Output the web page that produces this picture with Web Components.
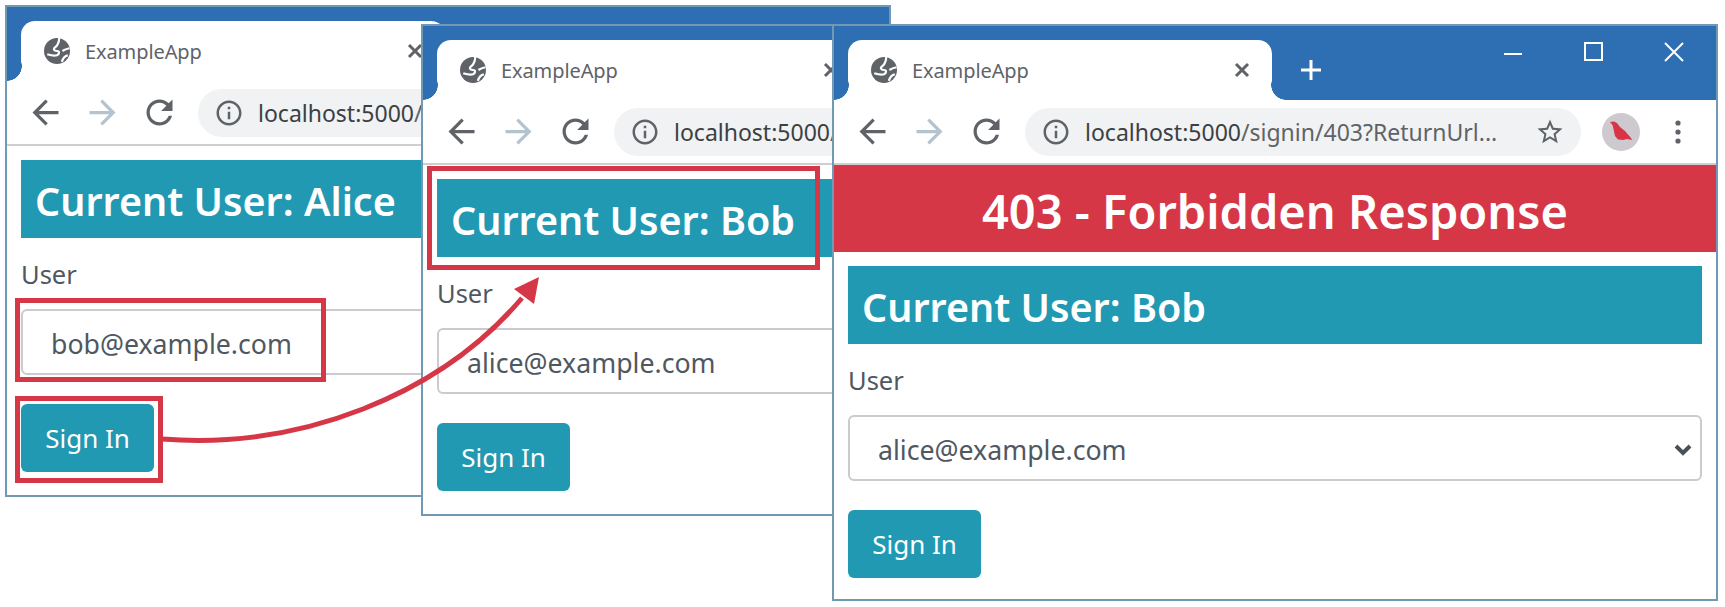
<!DOCTYPE html>
<html lang="en">
<head>
<meta charset="utf-8">
<title>ExampleApp</title>
<style>
  body { margin: 0; background: #fff; font-family: "Noto Sans", "Open Sans", sans-serif; }
</style>
</head>
<body>
<app-stage>
  <browser-window x="5" y="5" url="localhost:5000/">
    <user-form user="Alice" email="bob@example.com"></user-form>
  </browser-window>
  <browser-window x="421" y="24" url="localhost:5000/">
    <user-form user="Bob" email="alice@example.com"></user-form>
  </browser-window>
  <browser-window x="832" y="24" url="localhost:5000/signin/403?ReturnUrl..." controls>
    <status-banner>403 - Forbidden Response</status-banner>
    <user-form user="Bob" email="alice@example.com" select></user-form>
  </browser-window>
  <callout-layer></callout-layer>
</app-stage>

<script>
/**
 * The stage, a free canvas that holds the windows.
 */
customElements.define('app-stage',
  class extends HTMLElement {
    constructor () {
      super()
      this.attachShadow({ mode: 'open' }).innerHTML = `
        <style>
          :host {
            display: block;
            position: relative;
            width: 1725px;
            height: 607px;
            overflow: hidden;
            background: #fff;
          }
        </style>
        <slot></slot>
      `
    }
  })

/**
 * Material icon paths used by the browser chrome.
 */
const icons = {
  back: 'M20 11H7.83l5.59-5.59L12 4l-8 8 8 8 1.41-1.41L7.83 13H20v-2z',
  reload: 'M17.65 6.35C16.2 4.9 14.21 4 12 4c-4.42 0-7.99 3.58-7.99 8s3.57 8 7.99 8c3.73 0 6.84-2.55 7.73-6h-2.08c-.82 2.33-3.04 4-5.65 4-3.31 0-6-2.69-6-6s2.69-6 6-6c1.66 0 3.14.69 4.22 1.78L13 11h7V4l-2.35 2.35z',
  info: 'M11 7h2v2h-2zm0 4h2v6h-2zm1-9C6.48 2 2 6.48 2 12s4.48 10 10 10 10-4.48 10-10S17.52 2 12 2zm0 18c-4.41 0-8-3.59-8-8s3.59-8 8-8 8 3.59 8 8-3.59 8-8 8z',
  star: 'M22 9.24l-7.19-.62L12 2 9.19 8.63 2 9.24l5.46 4.73L5.82 21 12 17.27 18.18 21l-1.63-7.03L22 9.24zM12 15.4l-3.76 2.27 1-4.28-3.32-2.88 4.38-.38L12 6.1l1.71 4.04 4.38.38-3.32 2.88 1 4.28L12 15.4z'
}

const windowTemplate = document.createElement('template')
windowTemplate.innerHTML = `
  <style>
    :host {
      display: block;
      position: absolute;
      box-sizing: border-box;
      width: 886px;
      border: 2px solid #7199b4;
      background: #fff;
      color: #5f6368;
      font-family: "Noto Sans", "Open Sans", sans-serif;
    }

    #strip {
      display: flex;
      align-items: flex-end;
      height: 74px;
      background: #2e6eb3;
    }

    #tab {
      position: relative;
      display: flex;
      align-items: center;
      box-sizing: border-box;
      width: 424px;
      height: 60px;
      margin-left: 14px;
      padding: 0 22px 0 23px;
      border-radius: 14px 14px 0 0;
      background: #fff;
    }

    #tab::before, #tab::after {
      content: '';
      position: absolute;
      bottom: 0;
      width: 15px;
      height: 20px;
    }

    #tab::before {
      left: -14px;
      background: radial-gradient(circle 15px at 0 5px, #2e6eb3 14.5px, #fff 15px);
    }

    #tab::after {
      right: -14px;
      background: radial-gradient(circle 15px at 100% 5px, #2e6eb3 14.5px, #fff 15px);
    }

    #title {
      margin-left: 15px;
      font-size: 20px;
      letter-spacing: -0.1px;
      white-space: nowrap;
    }

    #close {
      margin-left: auto;
    }

    #plus {
      display: flex;
      margin: 0 0 19px 28px;
    }

    #controls {
      display: none;
      align-self: flex-start;
      margin-left: auto;
      padding-right: 1px;
    }

    :host([controls]) #controls {
      display: flex;
    }

    #controls svg {
      display: block;
      width: 81px;
      height: 52px;
    }

    #toolbar {
      display: flex;
      align-items: center;
      box-sizing: border-box;
      height: 65px;
      padding-left: 10px;
      border-bottom: 2px solid #cfcfd2;
    }

    .cell {
      display: flex;
      justify-content: center;
      flex: none;
      width: 57px;
    }

    #pill {
      display: flex;
      align-items: center;
      flex: none;
      box-sizing: border-box;
      width: 556px;
      height: 48px;
      margin-left: 10px;
      padding: 0 16px 0 16px;
      border-radius: 24px;
      background: #f0f2f3;
    }

    #url {
      margin-left: 14px;
      font-size: 23px;
      color: #5f6368;
      white-space: nowrap;
    }

    #url b {
      font-weight: 400;
      color: #3c4043;
    }

    #star {
      margin-left: auto;
    }

    #avatar {
      display: flex;
      flex: none;
      margin-left: 21px;
    }

    #menu {
      display: flex;
      flex: none;
      margin-left: 34px;
    }

    svg {
      display: block;
      flex: none;
      fill: #5f6368;
    }
  </style>
  <div id="strip">
    <div id="tab">
      <svg width="26" height="26" viewBox="0 0 24 24">
        <circle cx="12" cy="12" r="12"/>
        <path d="M14 0 C14 4 13 6 11 8 C8 10 9 12 12 12 C15 12 14 15 12 16 C9 17 6 16 3 15 M17 12 C18.5 11 21 10 23.5 9.5 M22 16 C19 16.5 17.5 18.5 16.5 22" fill="none" stroke="#fff" stroke-width="2"/>
      </svg>
      <span id="title">ExampleApp</span>
      <svg id="close" width="16" height="16" viewBox="0 0 16 16"><path d="M2 2 L14 14 M14 2 L2 14" fill="none" stroke="#5f6368" stroke-width="3"/></svg>
    </div>
    <div id="plus">
      <svg width="22" height="22" viewBox="0 0 22 22"><path d="M11 1 V21 M1 11 H21" fill="none" stroke="#fff" stroke-width="3"/></svg>
    </div>
    <div id="controls">
      <svg viewBox="0 0 81 52"><path d="M32 28 H50" fill="none" stroke="#fff" stroke-width="2"/></svg>
      <svg viewBox="0 0 81 52"><rect x="32" y="17" width="17" height="17" fill="none" stroke="#fff" stroke-width="2"/></svg>
      <svg viewBox="0 0 81 52"><path d="M31 17 L49 35 M49 17 L31 35" fill="none" stroke="#fff" stroke-width="2"/></svg>
    </div>
  </div>
  <div id="toolbar">
    <div class="cell"><svg width="39" height="39" viewBox="0 0 24 24"><path d="${icons.back}"/></svg></div>
    <div class="cell"><svg width="39" height="39" viewBox="0 0 24 24" style="transform: scaleX(-1); fill: #b4c3d0"><path d="${icons.back}"/></svg></div>
    <div class="cell"><svg width="39" height="39" viewBox="0 0 24 24"><path d="${icons.reload}"/></svg></div>
    <div id="pill">
      <svg width="30" height="30" viewBox="0 0 24 24"><path d="${icons.info}"/></svg>
      <span id="url"></span>
      <svg id="star" width="30" height="30" viewBox="0 0 24 24"><path d="${icons.star}"/></svg>
    </div>
    <div id="avatar">
      <svg width="38" height="38" viewBox="0 0 38 38">
        <circle cx="19" cy="19" r="19" fill="#cec9ce"/>
        <path d="M8 9 L12 8.5 L15 10 L18 14 L23 18 L29 25 L30 27 L25 26 L21 27 L16 26.5 L13 23 L11.5 16 L10.5 12 Z" fill="#d93445"/>
      </svg>
    </div>
    <div id="menu">
      <svg width="8" height="26" viewBox="0 0 8 26"><circle cx="4" cy="4" r="2.6"/><circle cx="4" cy="13" r="2.6"/><circle cx="4" cy="22" r="2.6"/></svg>
    </div>
  </div>
  <slot></slot>
`

/**
 * One browser window, placed on the stage by its x and y attributes.
 */
customElements.define('browser-window',
  class extends HTMLElement {
    constructor () {
      super()
      this.attachShadow({ mode: 'open' })
        .appendChild(windowTemplate.content.cloneNode(true))
    }

    connectedCallback () {
      this.style.left = this.getAttribute('x') + 'px'
      this.style.top = this.getAttribute('y') + 'px'

      // The host part of the address is shown darker than the rest.
      const url = this.getAttribute('url')
      const host = 'localhost:5000'
      this.shadowRoot.querySelector('#url').innerHTML = `<b>${host}</b>${url.slice(host.length)}`
    }
  })

/**
 * The red banner at the top of the error page.
 */
customElements.define('status-banner',
  class extends HTMLElement {
    constructor () {
      super()
      this.attachShadow({ mode: 'open' }).innerHTML = `
        <style>
          :host {
            display: flex;
            align-items: center;
            justify-content: center;
            box-sizing: border-box;
            height: 87px;
            padding-top: 5px;
            background: #d63747;
            color: #fff;
            font-size: 47px;
            font-weight: 600;
          }
        </style>
        <slot></slot>
      `
    }
  })

const formTemplate = document.createElement('template')
formTemplate.innerHTML = `
  <style>
    :host {
      display: block;
      padding: 14px 14px 23px;
      color: #4f5861;
    }

    :host([select]) {
      padding-bottom: 21px;
    }

    #current {
      display: flex;
      align-items: center;
      box-sizing: border-box;
      height: 78px;
      padding: 4px 0 0 14px;
      background: #2199b2;
      color: #fff;
      font-size: 39.5px;
      font-weight: 600;
    }

    #label {
      margin: 16px 0 15px;
      font-size: 25.5px;
      line-height: 40px;
    }

    #field {
      display: flex;
      align-items: center;
      justify-content: space-between;
      box-sizing: border-box;
      height: 66px;
      padding: 3px 8px 0 28px;
      border: 2px solid #cdc9ce;
      border-radius: 6px;
      font-size: 26.7px;
    }

    #field svg {
      display: none;
    }

    :host([select]) #field svg {
      display: block;
    }

    #submit {
      display: flex;
      align-items: center;
      justify-content: center;
      width: 133px;
      height: 68px;
      margin-top: 29px;
      border-radius: 6px;
      background: #2199b2;
      color: #fff;
      font-size: 26px;
    }
  </style>
  <div id="current"></div>
  <div id="label">User</div>
  <div id="field">
    <span id="email"></span>
    <svg width="18" height="14" viewBox="0 0 18 14"><path d="M2 3 L9 10 L16 3" fill="none" stroke="#495057" stroke-width="4"/></svg>
  </div>
  <div id="submit">Sign In</div>
`

/**
 * The page content: current user, user picker and sign in button.
 */
customElements.define('user-form',
  class extends HTMLElement {
    constructor () {
      super()
      this.attachShadow({ mode: 'open' })
        .appendChild(formTemplate.content.cloneNode(true))
    }

    connectedCallback () {
      this.shadowRoot.querySelector('#current').textContent = `Current User: ${this.getAttribute('user')}`
      this.shadowRoot.querySelector('#email').textContent = this.getAttribute('email')
    }
  })

/**
 * The red annotations drawn over the windows.
 */
customElements.define('callout-layer',
  class extends HTMLElement {
    constructor () {
      super()
      this.attachShadow({ mode: 'open' }).innerHTML = `
        <style>
          :host {
            display: block;
            position: absolute;
            left: 0;
            top: 0;
            pointer-events: none;
          }
          svg { display: block; }
          .box { fill: none; stroke: #d63747; stroke-width: 5; }
        </style>
        <svg width="1725" height="607" viewBox="0 0 1725 607">
          <rect class="box" x="17.5" y="300.5" width="306" height="79"/>
          <rect class="box" x="17.5" y="398.5" width="143" height="82"/>
          <rect class="box" x="429.5" y="168.5" width="388" height="99"/>
          <path d="M162 439 C300 450 440 395 522 298" fill="none" stroke="#d63747" stroke-width="5"/>
          <path d="M539 277 L534 304 L514 289 Z" fill="#d63747"/>
        </svg>
      `
    }
  })
</script>
</body>
</html>
